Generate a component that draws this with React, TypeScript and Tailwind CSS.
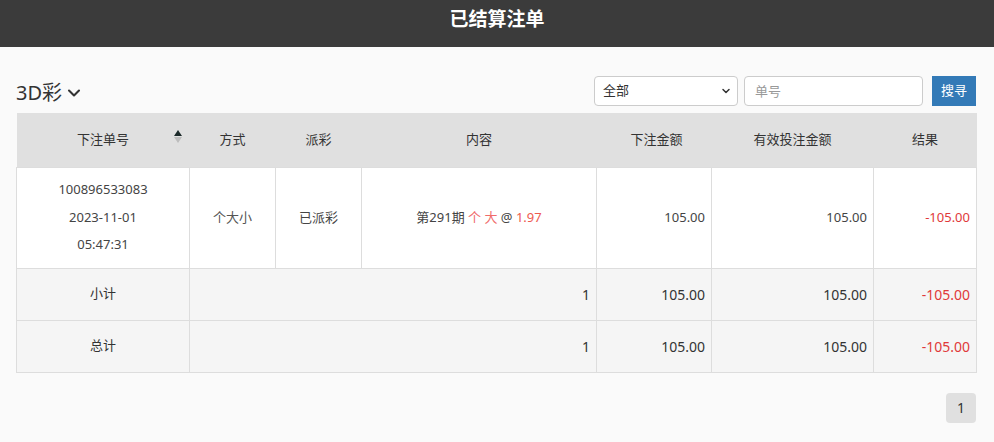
import { ChevronDown } from 'lucide-react';

const font = { fontFamily: '"Noto Sans", "Noto Sans CJK SC", sans-serif' };

export default function App() {
  return (
    <div className="min-h-[442px] bg-[#fafafa] text-[#333]" style={font}>
      <header className="h-[47px] bg-[#3b3b3b] flex items-center justify-center">
        <h1 className="text-white text-[19px] font-bold leading-none -mt-[8px]">已结算注单</h1>
      </header>

      <div className="pl-4 pr-[18px]">
        <div className="flex items-end justify-between mt-[29px] h-[30px]">
          <div className="flex items-center gap-[2px] text-[20px] leading-none pb-[3px]">
            <span>3D彩</span>
            <ChevronDown className="w-[20px] h-[20px]" strokeWidth={2.5} />
          </div>
          <div className="flex items-center">
            <div className="relative w-[144px] h-[30px] border border-[#ccc] rounded bg-white flex items-center px-2 text-[13px]">
              <span>全部</span>
              <ChevronDown className="absolute right-[5px] w-[12px] h-[12px]" strokeWidth={3} />
            </div>
            <input
              placeholder="单号"
              className="ml-[6px] w-[179px] h-[30px] border border-[#ccc] rounded bg-white px-[10px] text-[13px] placeholder:text-[#999] outline-none"
            />
            <button className="ml-[9px] w-[44px] h-[30px] bg-[#337ab7] text-white text-[13px]">搜寻</button>
          </div>
        </div>

        <table className="mt-[7px] w-[960px] border-collapse text-[13px] table-fixed">
          <colgroup>
            <col className="w-[173px]" />
            <col className="w-[86px]" />
            <col className="w-[86px]" />
            <col className="w-[235px]" />
            <col className="w-[115px]" />
            <col className="w-[162px]" />
            <col className="w-[103px]" />
          </colgroup>
          <thead>
            <tr className="h-[54px] bg-[#e0e0e0]">
              <th className="font-normal relative">
                下注单号
                <span className="absolute right-[8px] top-[17px] flex flex-col items-center leading-none">
                  <svg width="8" height="6" viewBox="0 0 8 6"><path d="M4 0L8 6H0Z" fill="#1c2a2a" /></svg>
                  <svg width="8" height="6" viewBox="0 0 8 6" className="mt-[1px]"><path d="M0 0H8L4 6Z" fill="#bdbdbd" /></svg>
                </span>
              </th>
              <th className="font-normal">方式</th>
              <th className="font-normal">派彩</th>
              <th className="font-normal">内容</th>
              <th className="font-normal text-right pr-[29px]">下注金额</th>
              <th className="font-normal">有效投注金额</th>
              <th className="font-normal">结果</th>
            </tr>
          </thead>
          <tbody>
            <tr className="h-[101px] bg-white text-[#444]">
              <td className="border border-[#ddd] text-center leading-[27.5px]">
                100896533083
                <br />
                2023-11-01
                <br />
                05:47:31
              </td>
              <td className="border border-[#ddd] text-center text-[#555]">个大小</td>
              <td className="border border-[#ddd] text-center">已派彩</td>
              <td className="border border-[#ddd] text-center">
                第291期 <span className="text-[#f06b6b]">个 大</span> @ <span className="text-[#ee5a4f]">1.97</span>
              </td>
              <td className="border border-[#ddd] text-right pr-[6px]">105.00</td>
              <td className="border border-[#ddd] text-right pr-[6px]">105.00</td>
              <td className="border border-[#ddd] text-right pr-[6px] text-[#e0393a]">-105.00</td>
            </tr>
            {['小计', '总计'].map((label) => (
              <tr key={label} className="h-[52px] bg-[#f5f5f5] text-[14px]">
                <td className="border border-[#ddd] text-center text-[13px]">{label}</td>
                <td colSpan={3} className="border border-[#ddd] text-right pr-[6px]">1</td>
                <td className="border border-[#ddd] text-right pr-[6px]">105.00</td>
                <td className="border border-[#ddd] text-right pr-[6px]">105.00</td>
                <td className="border border-[#ddd] text-right pr-[6px] text-[#e0393a]">-105.00</td>
              </tr>
            ))}
          </tbody>
        </table>

        <div className="flex justify-end mt-[20px]">
          <div className="w-[30px] h-[30px] rounded bg-[#e0e0e0] flex items-center justify-center text-[14px]">1</div>
        </div>
      </div>
    </div>
  );
}
